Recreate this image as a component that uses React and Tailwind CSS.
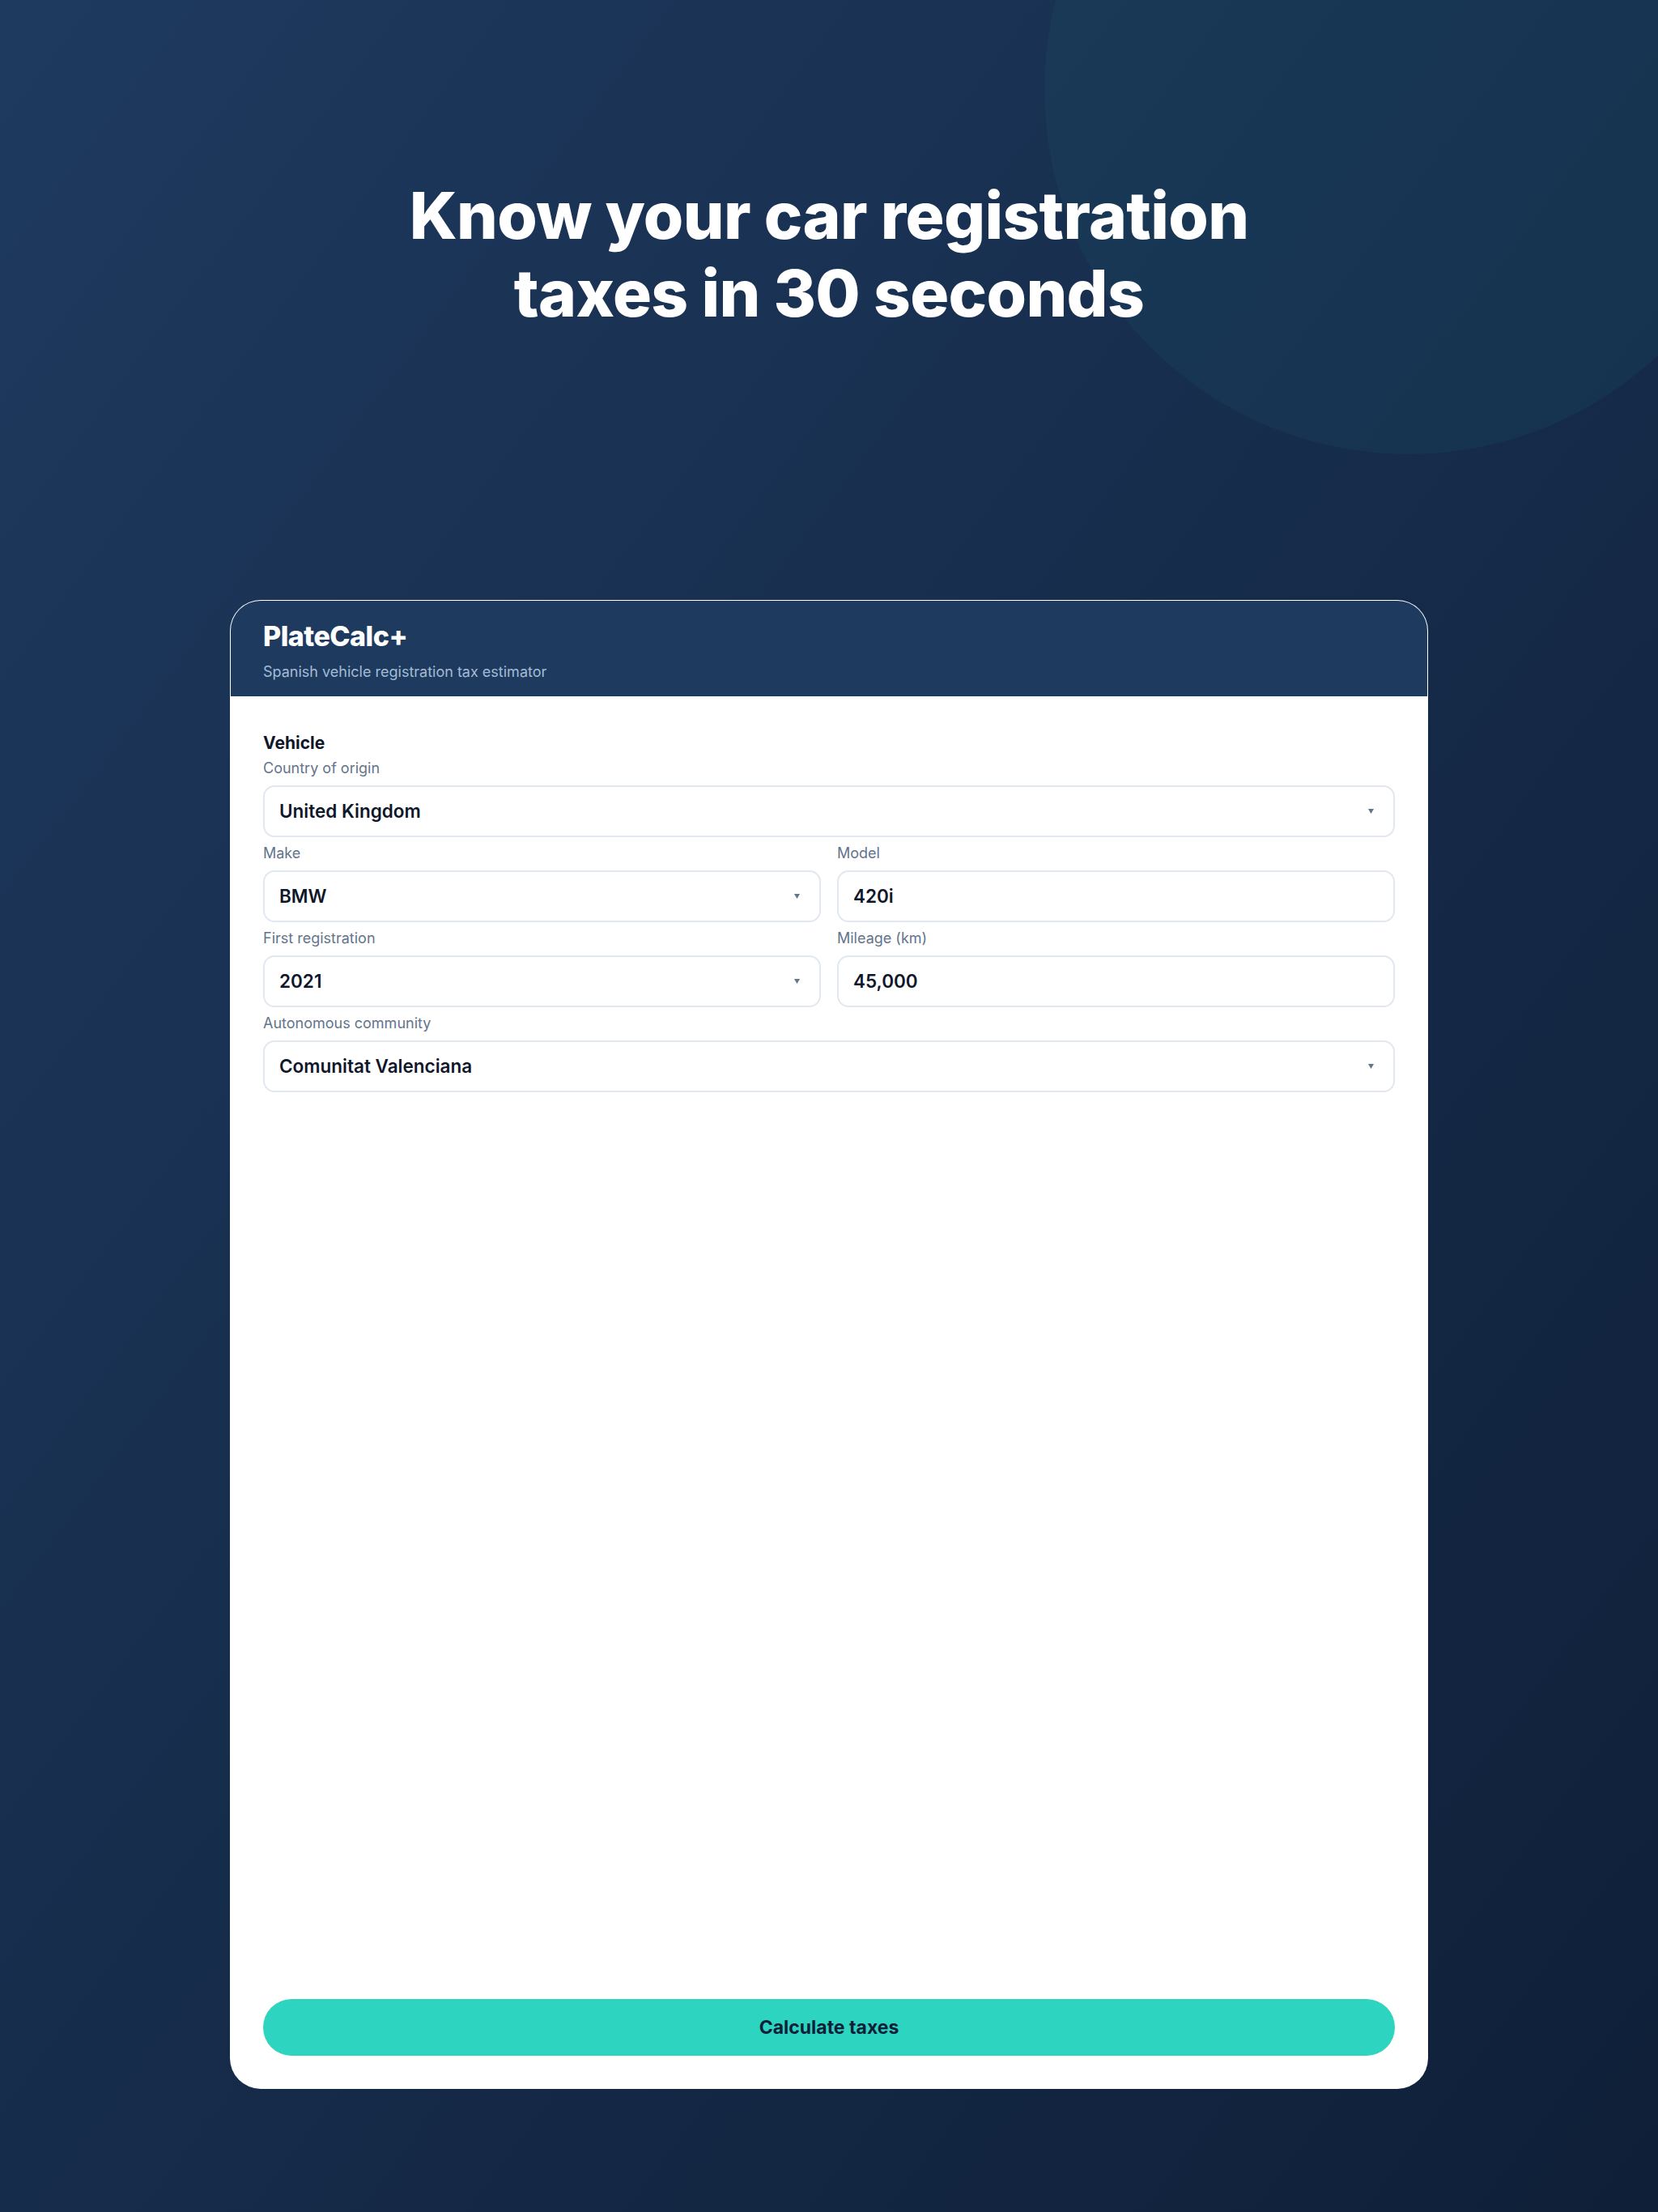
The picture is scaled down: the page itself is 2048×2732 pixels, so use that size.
import React from 'react'

// Small down-triangle used by the select fields
const Caret = () => (
  <svg width="7" height="6" viewBox="0 0 7 6" className="shrink-0">
    <polygon points="0,0 7,0 3.5,6" fill="#64748b" />
  </svg>
)

const Label = ({ children }) => (
  <div className="text-[18px] leading-[28px] text-[#64748b] mb-[7px]">{children}</div>
)

const Field = ({ label, value, select = false }) => (
  <div className="flex flex-col min-w-0">
    <Label>{label}</Label>
    <div className="h-[64px] rounded-[14px] border-2 border-[#e2e8f0] bg-white flex items-center justify-between pl-[18px] pr-[24px]">
      <span className="text-[22.5px] font-semibold text-[#0f172a]">{value}</span>
      {select && <Caret />}
    </div>
  </div>
)

export default function App() {
  return (
    <div
      className="relative overflow-hidden h-[2732px] flex flex-col items-center bg-gradient-to-br from-[#1e3a5f] to-[#0f1f38]"
      style={{ fontFamily: 'Inter, "Noto Sans", sans-serif' }}
    >
      {/* decorative circle */}
      <div className="absolute -top-[339px] -right-[142px] w-[900px] h-[900px] rounded-full bg-[#2dd4bf]/[0.05]" />

      {/* Hero */}
      <h1 className="relative pt-[218px] text-center text-white text-[80px] leading-[96px] font-extrabold tracking-[-0.008em]">
        Know your car registration
        <br />
        taxes in 30 seconds
      </h1>

      {/* Card */}
      <div className="relative mt-[331px] mb-[152px] w-[1480px] flex-1 flex flex-col rounded-[38px] overflow-hidden bg-white border border-white/10">
        <div className="bg-[#1e3a5f] px-[40px] pt-[24px] pb-[16px]">
          <div className="text-[34px] leading-[40px] font-extrabold text-white tracking-[-0.015em]">PlateCalc+</div>
          <div className="mt-[10px] text-[18px] leading-[28px] text-[#a3bbd6]">Spanish vehicle registration tax estimator</div>
        </div>

        <div className="flex-1 flex flex-col px-[40px] pt-[44px] pb-[40px]">
          <div className="text-[21px] leading-[28px] font-bold text-[#0f172a] mb-[3px]">Vehicle</div>
          <div className="flex flex-col gap-[6px]">
            <Field label="Country of origin" value="United Kingdom" select />
            <div className="grid grid-cols-2 gap-x-[20px]">
              <Field label="Make" value="BMW" select />
              <Field label="Model" value="420i" />
            </div>
            <div className="grid grid-cols-2 gap-x-[20px]">
              <Field label="First registration" value="2021" select />
              <Field label="Mileage (km)" value="45,000" />
            </div>
            <Field label="Autonomous community" value="Comunitat Valenciana" select />
          </div>

          <div className="flex-1" />

          <button className="h-[70px] w-full rounded-full bg-[#2dd4bf] text-[23px] font-bold text-[#0f1f38]">
            Calculate taxes
          </button>
        </div>
      </div>
    </div>
  )
}
